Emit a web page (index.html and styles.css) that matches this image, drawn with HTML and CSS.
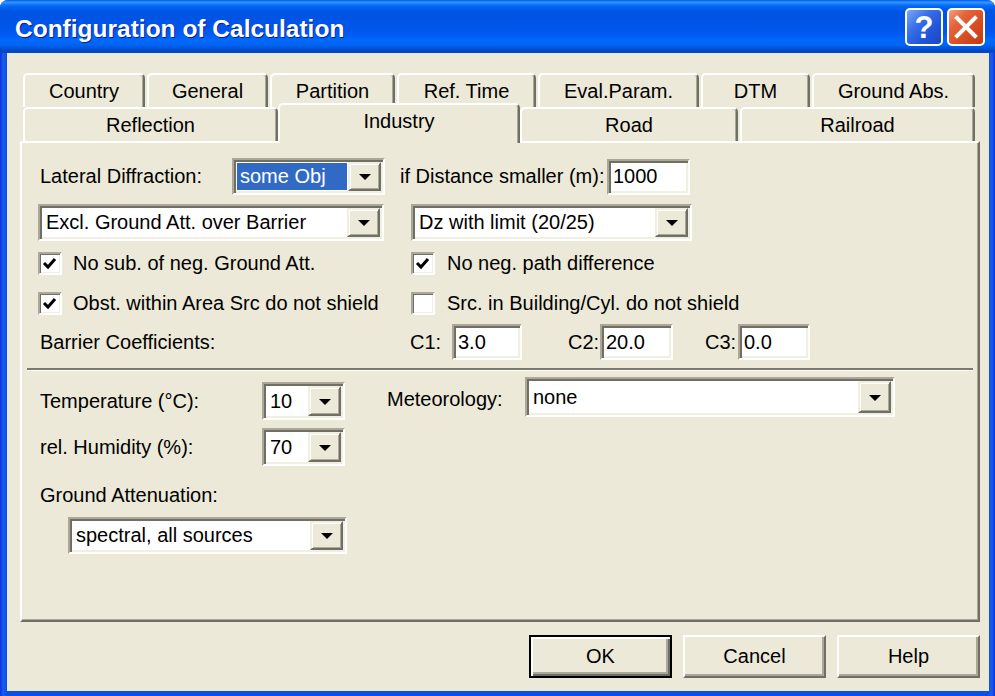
FILE: index.html
```html
<!DOCTYPE html>
<html lang="en">
<head>
<meta charset="utf-8">
<title>Configuration of Calculation</title>
<link rel="stylesheet" href="styles.css">
</head>
<body>
<div class="window">
  <div class="titlebar">
    <span class="title">Configuration of Calculation</span>
    <div class="caption-buttons">
      <button class="cap-btn cap-help" type="button">?</button>
      <button class="cap-btn cap-close" type="button" aria-label="Close">
        <svg width="34" height="34" viewBox="0 0 34 34"><path d="M8 8 L26 26 M26 8 L8 26" stroke="#fff" stroke-width="4" stroke-linecap="square" fill="none"/></svg>
      </button>
    </div>
  </div>

  <div class="client">
    <div class="tabstrip">
      <div class="tabrow back">
        <div class="tab t-country">Country</div>
        <div class="tab t-general">General</div>
        <div class="tab t-partition">Partition</div>
        <div class="tab t-reftime">Ref. Time</div>
        <div class="tab t-eval">Eval.Param.</div>
        <div class="tab t-dtm">DTM</div>
        <div class="tab t-ground">Ground Abs.</div>
      </div>
      <div class="tabrow front">
        <div class="tab t-reflection">Reflection</div>
        <div class="tab t-industry active">Industry</div>
        <div class="tab t-road">Road</div>
        <div class="tab t-railroad">Railroad</div>
      </div>
    </div>

    <div class="panel">
      <div class="row row-a">
        <span class="lbl w-lateral">Lateral Diffraction:</span>
        <div class="combo w-someobj">
          <span class="value sel">some Obj</span>
          <span class="dd"></span>
        </div>
        <span class="lbl w-distance">if Distance smaller (m):</span>
        <div class="field w-dist">1000</div>
      </div>

      <div class="row row-b">
        <div class="combo w-excl">
          <span class="value">Excl. Ground Att. over Barrier</span>
          <span class="dd"></span>
        </div>
        <div class="combo w-dz">
          <span class="value">Dz with limit (20/25)</span>
          <span class="dd"></span>
        </div>
      </div>

      <div class="row checkrow row-c">
        <label class="check left-col">
          <span class="cb"><svg viewBox="0 0 20 19" width="20" height="19"><polyline points="4,9 8,13 15,5" fill="none" stroke="#000" stroke-width="3"/></svg></span>
          <span class="check-text">No sub. of neg. Ground Att.</span>
        </label>
        <label class="check">
          <span class="cb"><svg viewBox="0 0 20 19" width="20" height="19"><polyline points="4,9 8,13 15,5" fill="none" stroke="#000" stroke-width="3"/></svg></span>
          <span class="check-text">No neg. path difference</span>
        </label>
      </div>

      <div class="row checkrow row-d">
        <label class="check left-col">
          <span class="cb"><svg viewBox="0 0 20 19" width="20" height="19"><polyline points="4,9 8,13 15,5" fill="none" stroke="#000" stroke-width="3"/></svg></span>
          <span class="check-text">Obst. within Area Src do not shield</span>
        </label>
        <label class="check">
          <span class="cb"></span>
          <span class="check-text">Src. in Building/Cyl. do not shield</span>
        </label>
      </div>

      <div class="row row-e">
        <span class="lbl w-barrier">Barrier Coefficients:</span>
        <span class="lbl w-c1">C1:</span>
        <div class="field w-c1f">3.0</div>
        <span class="lbl w-c2">C2:</span>
        <div class="field w-c2f">20.0</div>
        <span class="lbl w-c3">C3:</span>
        <div class="field w-c3f">0.0</div>
      </div>

      <div class="separator"></div>

      <div class="row row-f">
        <span class="lbl w-temp">Temperature (°C):</span>
        <div class="combo small">
          <span class="value">10</span>
          <span class="dd"></span>
        </div>
        <span class="lbl w-meteo">Meteorology:</span>
        <div class="combo w-none">
          <span class="value">none</span>
          <span class="dd"></span>
        </div>
      </div>

      <div class="row row-g">
        <span class="lbl w-temp">rel. Humidity (%):</span>
        <div class="combo small">
          <span class="value">70</span>
          <span class="dd"></span>
        </div>
      </div>

      <div class="row row-h">
        <span class="lbl">Ground Attenuation:</span>
      </div>

      <div class="row row-i">
        <div class="combo w-spectral">
          <span class="value">spectral, all sources</span>
          <span class="dd"></span>
        </div>
      </div>
    </div>

    <div class="actions">
      <button class="btn default" type="button">OK</button>
      <button class="btn" type="button">Cancel</button>
      <button class="btn" type="button">Help</button>
    </div>
  </div>
</div>
</body>
</html>
```

FILE: styles.css
```css
* { box-sizing: border-box; }

html, body {
  margin: 0;
  padding: 0;
  background: #ffffff;
}

body {
  width: 995px;
  height: 696px;
  overflow: hidden;
  font-family: "Liberation Sans", Arial, sans-serif;
  font-size: 20px;
  color: #000;
}

/* ---------- window frame ---------- */
.window {
  width: 995px;
  height: 696px;
  display: flex;
  flex-direction: column;
  border-radius: 8px 8px 0 0;
  overflow: hidden;
  background: linear-gradient(to right, #0831d9 0, #1a5cf0 3px, #0b4fe6 7px, #0b4fe6 988px, #1a5cf0 992px, #0831d9 995px);
}

.titlebar {
  flex: none;
  height: 53px;
  display: flex;
  align-items: center;
  padding: 0 10px 0 15px;
  background: linear-gradient(to bottom,
    #0058ee 0%, #3593ff 4%, #288eff 6%, #127dff 8%, #036ffc 10%,
    #0262ee 14%, #0057e5 20%, #0054e3 24%, #0055eb 56%, #005bf5 66%,
    #026afe 76%, #0062ef 86%, #0052d6 92%, #0046c0 96%, #0a44cc 100%);
}

.title {
  flex: 1;
  padding-top: 5px;
  color: #fff;
  font-weight: bold;
  font-size: 24.5px;
  text-shadow: 1px 1px 0 #0b1f8f;
  white-space: nowrap;
}

.caption-buttons {
  display: flex;
  gap: 4px;
  margin-top: 1px;
}

.cap-btn {
  width: 38px;
  height: 38px;
  padding: 0;
  border: 2px solid #fff;
  border-radius: 5px;
  display: flex;
  align-items: center;
  justify-content: center;
  color: #fff;
  font-family: "Liberation Sans", Arial, sans-serif;
}

.cap-help {
  background: linear-gradient(135deg, #7aa8fa 0%, #3a70e8 35%, #2257dc 65%, #1a46c4 100%);
  font-size: 31px;
  font-weight: bold;
  line-height: 1;
  padding-top: 1px;
}

.cap-close {
  background: linear-gradient(135deg, #f3a07f 0%, #e4643b 30%, #d84b21 65%, #c23a12 100%);
}

/* ---------- client area ---------- */
.client {
  flex: 1;
  margin: 0 6px 5px 7px;
  padding: 20px 9px 0 13px;
  background: #ece9d8;
  display: flex;
  flex-direction: column;
}

/* ---------- tabs ---------- */
.tabstrip {
  margin-left: 3px;
}

.tabrow {
  display: flex;
  gap: 2px;
  height: 34px;
}

.tab {
  height: 34px;
  flex: none;
  background: #ece9d8;
  border-top: 2px solid #fff;
  border-left: 2px solid #fff;
  border-right: 2px solid #716f64;
  border-radius: 5px 5px 0 0;
  box-shadow: inset -1px 0 0 #aca899;
  display: flex;
  align-items: center;
  justify-content: center;
  padding-top: 1px;
}

.t-country { width: 122px; }
.t-general { width: 121px; }
.t-partition { width: 125px; }
.t-reftime { width: 139px; }
.t-eval { width: 161px; }
.t-dtm { width: 109px; }
.t-ground { width: 163px; }

.t-reflection { width: 255px; }
.t-industry { width: 238px; }
.t-road { width: 218px; }
.t-railroad { width: 235px; }

.tab.active {
  width: 242px;
  height: 40px;
  margin: -4px -2px 0;
  padding: 0 0 6px;
  position: relative;
  z-index: 1;
}

/* ---------- property page ---------- */
.panel {
  height: 481px;
  flex: none;
  border: 2px solid;
  border-color: #fff #716f64 #716f64 #fff;
  box-shadow: inset -1px -1px 0 #aca899;
  padding: 0 0 0 16px;
}

.row {
  display: flex;
  align-items: center;
}

.lbl {
  flex: none;
  padding-left: 2px;
  white-space: nowrap;
}

.row-a { margin-top: 15px; height: 37px; }
.w-lateral { width: 194px; }
.w-someobj { width: 153px; height: 37px; }
.w-distance { width: 209px; margin-left: 13px; }
.w-dist { width: 83px; height: 36px; }

.row-b { margin-top: 9px; height: 37px; }
.w-excl { width: 346px; height: 37px; }
.w-dz { width: 281px; height: 37px; margin-left: 27px; }

.checkrow { height: 23px; }
.row-c { margin-top: 11px; }
.row-d { margin-top: 17px; }

.check {
  display: flex;
  align-items: center;
}
.check.left-col { width: 373px; }

.check-text { white-space: nowrap; }
.left-col .check-text { margin-left: 11px; }
.check:not(.left-col) .check-text { margin-left: 12px; }

.cb {
  width: 24px;
  height: 23px;
  flex: none;
  background: #fff;
  border: 2px solid;
  border-color: #aca899 #fff #fff #aca899;
  box-shadow: inset 1px 1px 0 #716f64, inset -1px -1px 0 #f1efe2;
  display: flex;
}

.row-e { margin-top: 9px; height: 36px; }
.w-barrier { width: 372px; }
.w-c1 { width: 42px; padding-left: 0; }
.w-c1f { width: 70px; height: 36px; }
.w-c2 { width: 32px; margin-left: 46px; padding-left: 0; }
.w-c2f { width: 73px; height: 36px; }
.w-c3 { width: 33px; margin-left: 32px; padding-left: 0; }
.w-c3f { width: 72px; height: 36px; }

.separator {
  margin: 8px 5px 0 -11px;
  height: 3px;
  border-top: 2px solid #7c7a6e;
  border-bottom: 1px solid #fff;
}

.row-f { margin-top: 6px; align-items: flex-start; }
.w-temp { width: 224px; }
.row-f .w-temp { margin-top: 5px; height: 38px; display: flex; align-items: center; }
.combo.small { width: 83px; height: 38px; }
.row-f .combo.small { margin-top: 5px; }
.w-meteo { width: 138px; margin-left: 42px; margin-top: 3px; height: 38px; display: flex; align-items: center; padding-left: 0; }
.w-none { width: 370px; height: 40px; }

.row-g { margin-top: 8px; height: 38px; }
.row-h { margin-top: 17px; height: 24px; }
.row-i { margin-top: 10px; }
.w-spectral { width: 279px; height: 37px; margin-left: 30px; }

/* ---------- controls ---------- */
.combo,
.field {
  flex: none;
  display: flex;
  background: #fff;
  border: 2px solid;
  border-color: #aca899 #fff #fff #aca899;
  box-shadow: inset 2px 2px 0 #716f64, inset -2px -2px 0 #f1efe2;
  padding: 2px;
}

.field {
  align-items: center;
  padding-left: 4px;
}

.combo .value {
  flex: 1;
  margin: 1px;
  padding-left: 3px;
  display: flex;
  align-items: center;
  white-space: nowrap;
  overflow: hidden;
}

.combo .value.sel {
  background: #316ac5;
  color: #fff;
}

.dd {
  width: 33px;
  flex: none;
  background: #ece9d8;
  border: 2px solid;
  border-color: #f1efe2 #716f64 #716f64 #f1efe2;
  box-shadow: inset 1px 1px 0 #fff, inset -1px -1px 0 #aca899;
  display: flex;
  align-items: center;
  justify-content: center;
}

.dd::after {
  content: "";
  width: 0;
  height: 0;
  border-left: 6px solid transparent;
  border-right: 6px solid transparent;
  border-top: 6px solid #000;
  margin-top: 1px;
}

/* ---------- dialog buttons ---------- */
.actions {
  display: flex;
  justify-content: flex-end;
  gap: 11px;
  margin-top: 13px;
}

.btn {
  width: 143px;
  height: 43px;
  padding: 0;
  background: #ece9d8;
  font-family: "Liberation Sans", Arial, sans-serif;
  font-size: 20px;
  color: #000;
  border: 2px solid;
  border-color: #fff #716f64 #716f64 #fff;
  box-shadow: inset -2px -2px 0 #aca899;
}

.btn.default {
  border: 2px solid #000;
  box-shadow: inset 2px 2px 0 #fff, inset -2px -2px 0 #716f64, inset -4px -4px 0 #aca899;
}
```
